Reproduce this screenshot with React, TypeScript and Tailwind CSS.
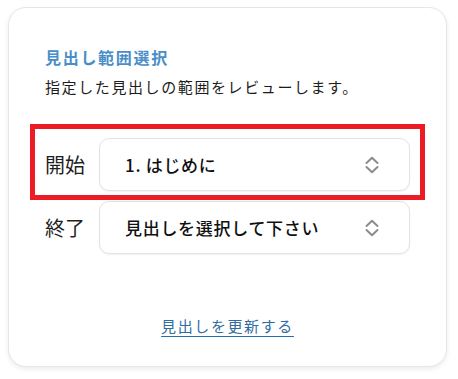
import type { ReactNode } from "react";

const FONT = { fontFamily: '"Noto Sans CJK JP", "Noto Sans", sans-serif' };

function UpDown() {
  return (
    <svg width="14" height="18" viewBox="0 0 14 18" fill="none" stroke="#8c8c8c" strokeWidth="2" strokeLinecap="round" strokeLinejoin="round">
      <polyline points="1.5,7 7,1.8 12.5,7" />
      <polyline points="1.5,11 7,16.2 12.5,11" />
    </svg>
  );
}

function Row({ label, value, className }: { label: string; value: ReactNode; className?: string }) {
  return (
    <div className={"flex items-center " + (className ?? "")}>
      <span className="w-[54px] shrink-0 text-[20px] leading-[28px] text-[#1f1f1f]">{label}</span>
      <button className="flex h-[53px] flex-1 items-center justify-between rounded-[10px] border border-[#e3e3e3] bg-white pl-[25px] pr-[30px] text-left shadow-[0_1px_2px_rgba(0,0,0,0.06)]">
        <span className="text-[17px] font-medium leading-[24px] tracking-[0.7px] text-[#111]">{value}</span>
        <UpDown />
      </button>
    </div>
  );
}

export default function App() {
  return (
    <div className="min-h-screen bg-white pl-[8px] pt-[7px]" style={FONT}>
      <div className="flex h-[360px] w-[439px] flex-col rounded-[18px] border border-[#e6e6e6] bg-white px-[21px] pt-[37px] shadow-[0_2px_5px_rgba(0,0,0,0.08)]">
        <div className="pl-[15px]">
          <h2 className="text-[16px] font-bold leading-[24px] tracking-[1.7px] text-[#4a8ec8]">見出し範囲選択</h2>
          <p className="mt-[7px] text-[15px] leading-[22px] tracking-[1.6px] text-[#1c1c1c]">指定した見出しの範囲をレビューします。</p>
        </div>

        <div className="mt-[26px] border-[5px] border-[#ed1c24] pb-[4px] pl-[10px] pr-[10px] pt-[9px]">
          <Row label="開始" value="1. はじめに" />
        </div>
        <Row label="終了" value="見出しを選択して下さい" className="mt-[1px] pl-[15px] pr-[15px]" />

        <div className="mt-auto mb-[28px] text-center">
          <a href="#" className="text-[15px] leading-[24px] tracking-[1.6px] text-[#2f6c9f] underline decoration-[#1f6fb2] underline-offset-[4px]">
            見出しを更新する
          </a>
        </div>
      </div>
    </div>
  );
}
